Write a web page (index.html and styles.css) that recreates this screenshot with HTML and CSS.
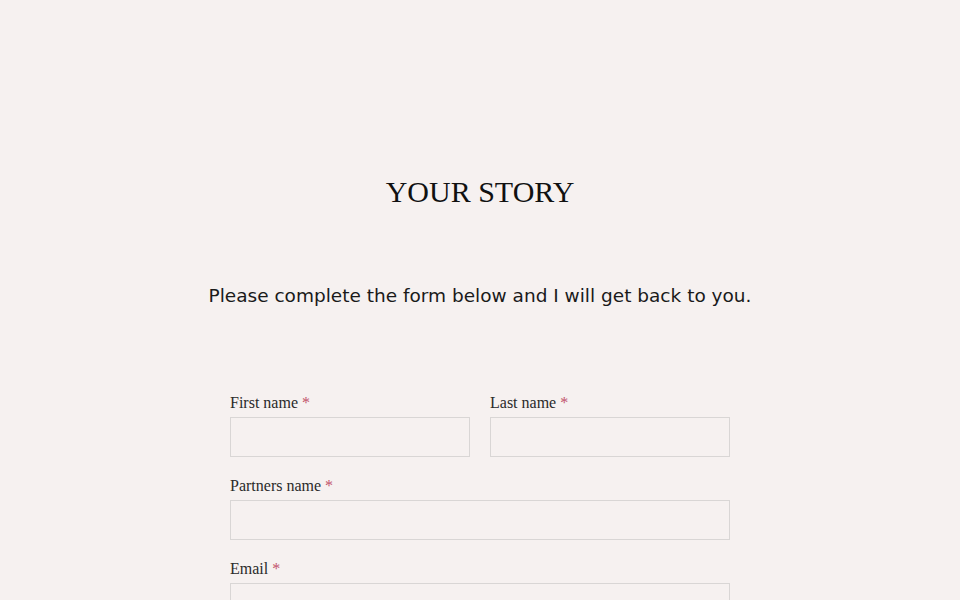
FILE: index.html
```html
<!DOCTYPE html>
<html lang="en">
<head>
<meta charset="utf-8">
<title>Your Story</title>
<link rel="stylesheet" href="styles.css">
</head>
<body>
<main class="page">
  <h1 class="title">YOUR STORY</h1>
  <p class="intro">Please complete the form below and I will get back to you.</p>
  <form class="form">
    <div class="row two">
      <div class="field">
        <label class="label" for="first">First name <span class="req">*</span></label>
        <input class="input" id="first" type="text">
      </div>
      <div class="field">
        <label class="label" for="last">Last name <span class="req">*</span></label>
        <input class="input" id="last" type="text">
      </div>
    </div>
    <div class="row">
      <div class="field">
        <label class="label" for="partner">Partners name <span class="req">*</span></label>
        <input class="input" id="partner" type="text">
      </div>
    </div>
    <div class="row">
      <div class="field">
        <label class="label" for="email">Email <span class="req">*</span></label>
        <input class="input" id="email" type="email">
      </div>
    </div>
  </form>
</main>
</body>
</html>
```

FILE: styles.css
```css
html, body {
  margin: 0;
  padding: 0;
  background: #f6f1f0;
}
.page {
  display: flex;
  flex-direction: column;
  align-items: center;
  padding-top: 172px;
}
.title {
  margin: 0;
  font-family: "Liberation Serif", "DejaVu Serif", serif;
  font-weight: normal;
  font-size: 30px;
  line-height: 40px;
  letter-spacing: 0;
  color: #111;
}
.intro {
  margin: 71px 0 0;
  font-family: "DejaVu Sans", sans-serif;
  font-size: 18.5px;
  line-height: 26px;
  color: #1a1a1a;
}
.form {
  width: 500px;
  margin-top: 85px;
  display: flex;
  flex-direction: column;
  gap: 20px;
}
.row {
  display: flex;
  gap: 20px;
}
.field {
  flex: 1;
  display: flex;
  flex-direction: column;
}
.label {
  font-family: "Liberation Serif", "DejaVu Serif", serif;
  font-size: 16px;
  line-height: 18px;
  margin-bottom: 5px;
  color: #2a2a2a;
}
.req {
  color: #c2526b;
}
.input {
  box-sizing: border-box;
  height: 40px;
  border: 1px solid #d9d6d5;
  background: #f6f1f0;
  margin: 0;
  padding: 0 10px;
}
```
